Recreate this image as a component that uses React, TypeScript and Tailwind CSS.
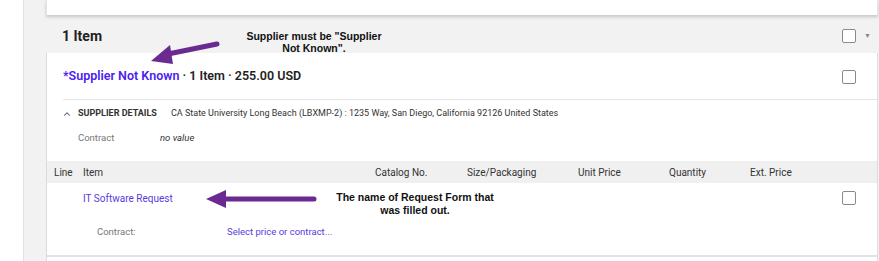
import React from "react";
import { ChevronUp } from "lucide-react";

const Box = () => (
  <div className="w-[14px] h-[14px] border border-[#8a8a8a] rounded-[2px] bg-white" />
);

const cols = [
  { label: "Catalog No.", x: "w-[92px]" },
  { label: "Size/Packaging", x: "w-[111px]" },
  { label: "Unit Price", x: "w-[91px]" },
  { label: "Quantity", x: "w-[81px]" },
  { label: "Ext. Price", x: "w-[60px]" },
];

export default function App() {
  return (
    <div className="relative w-[879px] h-[261px] overflow-hidden bg-white flex font-['Roboto',sans-serif] text-[#222]">
      <div className="w-[23px] shrink-0 bg-white" />
      <div className="flex-1 bg-[#f2f2f2] border-l border-[#e2e2e2] pl-[22px] pr-[1px] flex flex-col">
        <div className="h-[15px] bg-white shadow-[0_2px_3px_rgba(0,0,0,0.18)] border-x border-[#e4e4e4]" />

        <div className="h-[38px] flex items-center pt-[4px] pl-[16px] pr-[7px]">
          <span className="text-[14px] font-bold text-[#222]">1 Item</span>
          <div className="ml-auto flex items-center gap-[8px]">
            <Box />
            <span className="text-[7px] text-[#888]">▼</span>
          </div>
        </div>

        <div className="flex-1 bg-white border-x border-[#dcdcdc] flex flex-col">
          <div className="h-[46px] flex items-center pt-[1px] pl-[16px] pr-[21px]">
            <span className="text-[12.5px] font-semibold">
              <span className="text-[#4b22f0]">*Supplier Not Known</span>
              <span className="text-[#222]"> · 1 Item · 255.00 USD</span>
            </span>
            <div className="ml-auto">
              <Box />
            </div>
          </div>
          <div className="ml-[16px] border-t border-[#e6e6e6]" />

          <div className="h-[27px] flex items-center pl-[15px] text-[9px]">
            <span className="w-[16px] text-[#555]">
              <ChevronUp size={10} strokeWidth={2.5} />
            </span>
            <span className="w-[93px] font-bold text-[#333]">SUPPLIER DETAILS</span>
            <span className="text-[#333]">
              CA State University Long Beach (LBXMP-2) : 1235 Way, San Diego, California 92126 United States
            </span>
          </div>
          <div className="h-[22px] flex items-center pl-[31px] text-[9.5px]">
            <span className="w-[82px] text-[#777]">Contract</span>
            <span className="italic text-[#333]">no value</span>
          </div>

          <div className="mt-[12px] h-[22px] bg-[#f0f0f0] flex items-center pl-[7px] text-[10px] text-[#333]">
            <span className="w-[29px]">Line</span>
            <span className="w-[292px]">Item</span>
            {cols.map((c) => (
              <span key={c.label} className={c.x}>
                {c.label}
              </span>
            ))}
          </div>

          <div className="h-[30px] flex items-center pl-[36px] pr-[21px]">
            <span className="text-[10px] text-[#5a3be0]">IT Software Request</span>
            <div className="ml-auto">
              <Box />
            </div>
          </div>
          <div className="h-[42px] flex items-start pt-[12px] pl-[50px] text-[9.5px]">
            <span className="w-[130px] text-[#777]">Contract:</span>
            <span className="text-[#5a3be0]">Select price or contract...</span>
          </div>
          <div className="border-t-2 border-[#e2e2e2]" />
        </div>
      </div>

      <svg className="absolute left-0 top-0 pointer-events-none" width="879" height="261">
        <line x1="217" y1="44" x2="168" y2="54" stroke="#6a2a91" strokeWidth="5" strokeLinecap="round" />
        <polygon points="151,61 170,45 173,64" fill="#6a2a91" />
        <line x1="314" y1="199" x2="226" y2="199" stroke="#6a2a91" strokeWidth="5" strokeLinecap="round" />
        <polygon points="206,199 226,190 226,208" fill="#6a2a91" />
      </svg>

      <div className="absolute left-[240px] top-[30px] w-[148px] text-center text-[10.5px] leading-[12px] font-bold text-[#111] font-['Liberation_Sans',Arial,sans-serif]">
        Supplier must be "Supplier Not Known".
      </div>
      <div className="absolute left-[328px] top-[191px] w-[174px] text-center text-[10.5px] leading-[13px] font-bold text-[#111] font-['Liberation_Sans',Arial,sans-serif]">
        The name of Request Form that was filled out.
      </div>
    </div>
  );
}
